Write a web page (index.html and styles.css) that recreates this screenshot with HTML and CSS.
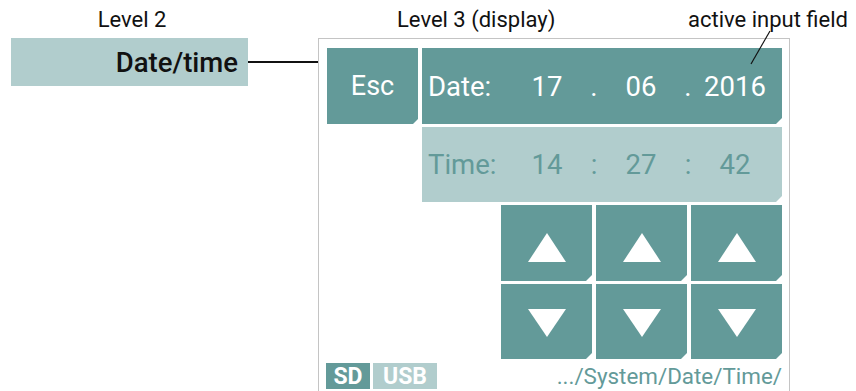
FILE: index.html
```html
<!DOCTYPE html>
<html>
<head>
<meta charset="utf-8">
<link rel="stylesheet" href="styles.css">
</head>
<body>
<div class="header">
  <div class="lbl lbl2">Level 2</div>
  <div class="lbl lbl3">Level 3 (display)</div>
  <div class="lbl lbl4">active input field</div>
</div>
<div class="main">
  <div class="menu-item">Date/time</div>
  <div class="connector"></div>
  <div class="frame">
    <div class="btn esc">Esc</div>
    <div class="field date">
      <span class="flabel">Date:</span><span class="num">17</span><span class="sep">.</span><span class="num">06</span><span class="sep">.</span><span class="num">2016</span>
    </div>
    <div class="field time">
      <span class="flabel">Time:</span><span class="num">14</span><span class="sep">:</span><span class="num">27</span><span class="sep">:</span><span class="num">42</span>
    </div>
    <div class="btn arrow up c1"><svg width="38" height="29" viewBox="0 0 38 29"><polygon points="19,0 38,29 0,29" fill="#fff"/></svg></div>
    <div class="btn arrow up c2"><svg width="38" height="29" viewBox="0 0 38 29"><polygon points="19,0 38,29 0,29" fill="#fff"/></svg></div>
    <div class="btn arrow up c3"><svg width="38" height="29" viewBox="0 0 38 29"><polygon points="19,0 38,29 0,29" fill="#fff"/></svg></div>
    <div class="btn arrow down c1"><svg width="38" height="28" viewBox="0 0 38 28"><polygon points="0,0 38,0 19,28" fill="#fff"/></svg></div>
    <div class="btn arrow down c2"><svg width="38" height="28" viewBox="0 0 38 28"><polygon points="0,0 38,0 19,28" fill="#fff"/></svg></div>
    <div class="btn arrow down c3"><svg width="38" height="28" viewBox="0 0 38 28"><polygon points="0,0 38,0 19,28" fill="#fff"/></svg></div>
    <div class="footer">
      <span class="badge sd">SD</span><span class="badge usb">USB</span><span class="path">.../System/Date/Time/</span>
    </div>
  </div>
</div>
<svg class="pointer" width="30" height="40" viewBox="0 0 30 40"><line x1="1" y1="38" x2="20" y2="5" stroke="#111" stroke-width="1.2"/></svg>
</body>
</html>
```
FILE: styles.css
```css
html, body {
  margin: 0;
  padding: 0;
  background: #fff;
}
body {
  width: 856px;
  height: 391px;
  overflow: hidden;
  position: relative;
  font-family: Roboto, "Noto Sans", sans-serif;
  color: #111;
}
.header {
  display: flex;
  height: 38px;
  font-size: 22px;
  line-height: 24px;
  white-space: nowrap;
}
.lbl {
  padding-top: 8px;
  box-sizing: border-box;
}
.lbl2 {
  width: 264px;
  text-align: center;
}
.lbl3 {
  margin-left: 133px;
  width: 291px;
}
.lbl4 {
  width: 168px;
}
.main {
  display: flex;
  align-items: flex-start;
  padding-left: 11px;
}
.menu-item {
  width: 237px;
  height: 48px;
  box-sizing: border-box;
  background: #b1cdcd;
  display: flex;
  align-items: center;
  justify-content: flex-end;
  padding-right: 10px;
  font-size: 27.5px;
  font-weight: 500;
  color: #111;
}
.connector {
  width: 70px;
  height: 2px;
  margin-top: 23px;
  background: #111;
}
.frame {
  width: 472px;
  box-sizing: border-box;
  border: 1px solid #c4c4c4;
  padding: 9px 7px 10px 8px;
  display: grid;
  grid-template-columns: 91px 75px 91px 91px 91px;
  grid-template-rows: 76px 75px 76px 75px auto;
  column-gap: 4px;
  row-gap: 3px;
}
.btn {
  background: #639a99;
  color: #fff;
  clip-path: polygon(0 0, 100% 0, 100% calc(100% - 6px), calc(100% - 6px) 100%, 0 100%);
}
.esc {
  grid-column: 1;
  grid-row: 1;
  display: flex;
  align-items: center;
  justify-content: center;
  font-size: 27px;
  clip-path: polygon(0 0, 100% 0, 100% calc(100% - 5px), calc(100% - 5px) 100%, 0 100%);
}
.field {
  grid-column: 2 / 6;
  display: grid;
  grid-template-columns: 89px 72px 22px 72px 22px 72px;
  align-items: center;
  font-size: 27.5px;
  clip-path: polygon(0 0, 100% 0, 100% calc(100% - 6px), calc(100% - 6px) 100%, 0 100%);
}
.date {
  grid-row: 1;
  background: #639a99;
  color: #fff;
}
.time {
  grid-row: 2;
  background: #b1cdcd;
  color: #639a99;
}
.flabel {
  padding-left: 6px;
}
.num, .sep {
  text-align: center;
}
.arrow {
  display: flex;
  justify-content: center;
  align-items: flex-start;
}
.arrow svg {
  display: block;
}
.up {
  grid-row: 3;
  padding-top: 28px;
}
.down {
  grid-row: 4;
  padding-top: 25px;
}
.c1 { grid-column: 3; }
.c2 { grid-column: 4; }
.c3 { grid-column: 5; }
.footer {
  grid-column: 1 / -1;
  grid-row: 5;
  margin-top: 1px;
  display: flex;
  align-items: center;
  height: 26px;
}
.badge {
  height: 26px;
  display: flex;
  align-items: center;
  justify-content: center;
  color: #fff;
  font-weight: 700;
  font-size: 23px;
}
.sd {
  width: 44px;
  margin-left: -1px;
  background: #639a99;
}
.usb {
  width: 64px;
  margin-left: 3px;
  background: #b1cdcd;
}
.path {
  margin-left: auto;
  font-size: 22.4px;
  color: #639a99;
  line-height: 26px;
}
.pointer {
  position: absolute;
  left: 750px;
  top: 26px;
}
```
